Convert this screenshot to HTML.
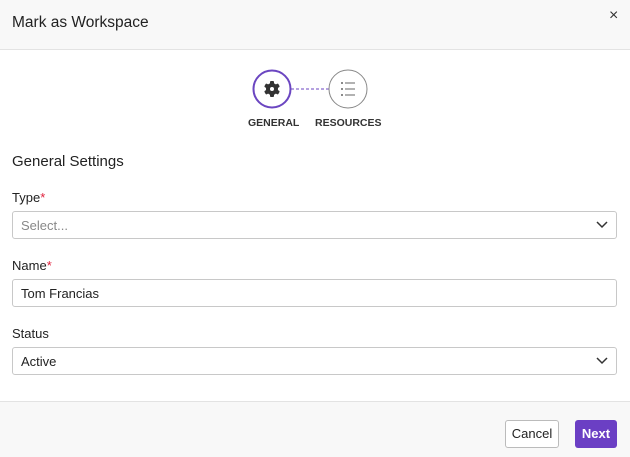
<!DOCTYPE html>
<html><head><meta charset="utf-8"><style>
*{box-sizing:border-box;margin:0;padding:0}
body{width:630px;height:457px;background:#fff;font-family:"Liberation Sans",sans-serif;color:#222;position:relative;overflow:hidden}
.hdr{position:absolute;left:0;top:0;width:630px;height:50px;background:#f8f8f8;border-bottom:1px solid #e3e3e3}
.hdr .t{position:absolute;left:12px;top:14px;font-size:15.5px;color:#222}
.hdr .x{position:absolute;left:609px;top:7px;font-size:16px;color:#333}
.lbl{position:absolute;font-size:10.5px;font-weight:bold;color:#333;top:117px}
h2{position:absolute;left:12px;top:153px;font-size:15px;font-weight:normal;color:#222}
.fl{position:absolute;left:12px;font-size:13px;color:#222}
.fl b{color:#e0203c;font-weight:normal}
.in{position:absolute;left:12px;width:605px;height:28px;border:1px solid #c8c8c8;border-radius:3px;font-size:13px;padding:6px 8px;color:#222}
.in svg{position:absolute;right:8px;top:9px}
.ftr{position:absolute;left:0;top:401px;width:630px;height:56px;background:#f8f8f8;border-top:1px solid #e3e3e3}
.btn{position:absolute;top:420px;height:28px;border-radius:3px;font-size:13px;line-height:28px;text-align:center}
</style></head><body>
<div class="hdr"><div class="t">Mark as Workspace</div><div class="x">×</div></div>

<svg style="position:absolute;left:0;top:0" width="630" height="140">
<line x1="291" y1="89" x2="329" y2="89" stroke="#6b46c1" stroke-width="1" stroke-dasharray="3,2"/>
<circle cx="272" cy="89" r="18.5" fill="#fff" stroke="#6b46c1" stroke-width="2"/>
<circle cx="348" cy="89" r="19" fill="#fff" stroke="#888" stroke-width="1"/>
<g transform="translate(272,89)" fill="#333">
<circle r="6"/>
<rect x="-2" y="-8" width="4" height="16" rx="1"/>
<rect x="-2" y="-8" width="4" height="16" rx="1" transform="rotate(60)"/>
<rect x="-2" y="-8" width="4" height="16" rx="1" transform="rotate(120)"/>
<circle r="2" fill="#fff"/>
</g>
<g fill="#666">
<circle cx="342" cy="83" r="1"/><circle cx="342" cy="89" r="1"/><circle cx="342" cy="95" r="1"/>
<rect x="345" y="82.5" width="10" height="1"/><rect x="345" y="88.5" width="10" height="1"/><rect x="345" y="94.5" width="10" height="1"/>
</g>
</svg>
<div class="lbl" style="left:248px">GENERAL</div>
<div class="lbl" style="left:315px">RESOURCES</div>

<h2>General Settings</h2>
<div class="fl" style="top:190px">Type<b>*</b></div>
<div class="in" style="top:211px;color:#888">Select...<svg width="12" height="8"><path d="M1 1l5 5 5-5" stroke="#333" stroke-width="1.5" fill="none"/></svg></div>
<div class="fl" style="top:258px">Name<b>*</b></div>
<div class="in" style="top:279px">Tom Francias</div>
<div class="fl" style="top:326px">Status</div>
<div class="in" style="top:347px">Active<svg width="12" height="8"><path d="M1 1l5 5 5-5" stroke="#333" stroke-width="1.5" fill="none"/></svg></div>

<div class="ftr"></div>
<div class="btn" style="left:505px;width:54px;border:1px solid #bbb;background:#fff;color:#222;line-height:26px">Cancel</div>
<div class="btn" style="left:575px;width:42px;background:#6b3fc4;color:#fff;font-weight:bold">Next</div>
</body></html>
